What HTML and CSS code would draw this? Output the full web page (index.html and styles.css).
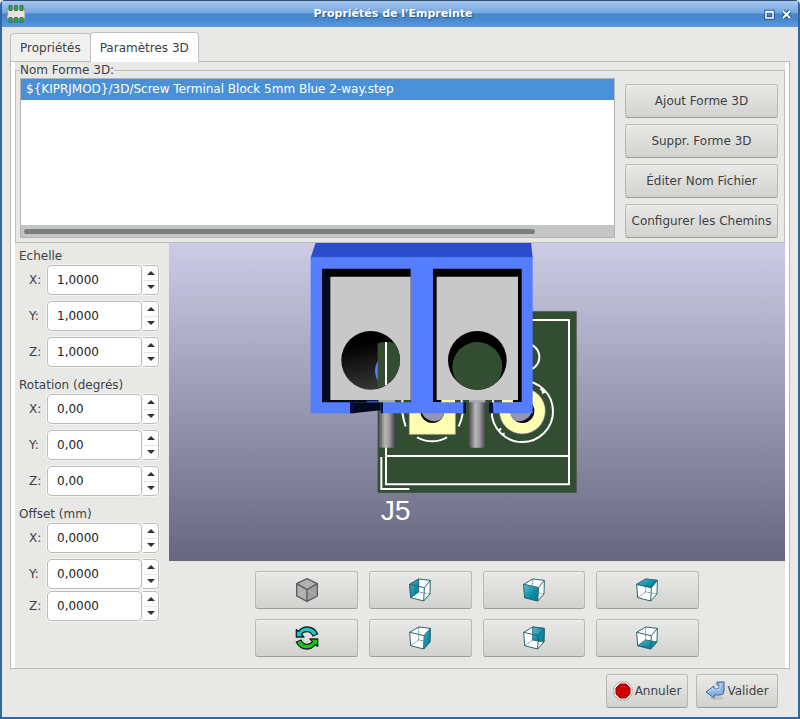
FILE: index.html
```html
<!DOCTYPE html>
<html lang="fr">

<head>
    <meta charset="UTF-8" />
    <meta name="viewport" content="width=device-width, initial-scale=1.0" />
    <title>Propriétés de l'Empreinte</title>
    <link rel="stylesheet" href="styles.css">
</head>

<body>
    <div class="window">
        <header class="titlebar">
            <svg class="app-icon" width="20" height="20" viewBox="0 0 20 20">
                <path d="M1 5h18v10H1v-3l1-2-1-2z" fill="#e4e4e2" stroke="#8a8a86" />
                <g fill="#0fc23a" stroke="#4d6b58">
                    <path d="M3 1.500h3v5H3zM8.500 1.500h3v5h-3zM14 1.500h3v5h-3z" />
                    <path d="M3 13.500h3v5H3zM8.500 13.500h3v5h-3zM14 13.500h3v5h-3z" />
                </g>
            </svg>
            <h1>Propriétés de l'Empreinte</h1>
            <div class="window-buttons">
                <button type="button" aria-label="Agrandir">
                    <svg width="11" height="11" viewBox="0 0 11 11" fill="none">
                        <path d="M2 2.500h7v6.500H2z" stroke="#24548c" stroke-width="3.500" />
                        <path d="M2 2.500h7v6.500H2zM2 3h7" stroke="#fff" stroke-width="1.500" />
                    </svg>
                </button>
                <button type="button" aria-label="Fermer">
                    <svg width="11" height="11" viewBox="0 0 11 11" fill="none">
                        <path d="M2 2l7 7M9 2l-7 7" stroke="#24548c" stroke-width="4" />
                        <path d="M2 2l7 7M9 2l-7 7" stroke="#fff" stroke-width="2" />
                    </svg>
                </button>
            </div>
        </header>

        <main>
            <nav class="tabs" role="tablist">
                <button type="button" class="tab" role="tab" aria-selected="false">Propriétés</button>
                <button type="button" class="tab is-active" role="tab" aria-selected="true">Paramètres 3D</button>
            </nav>

            <div class="panel">
                <fieldset class="shapes">
                    <legend>Nom Forme 3D:</legend>
                    <div class="shape-list">
                        <ul>
                            <li class="selected">${KIPRJMOD}/3D/Screw Terminal Block 5mm Blue 2-way.step</li>
                        </ul>
                        <div class="scrollbar">
                            <div class="thumb"></div>
                        </div>
                    </div>
                    <div class="shape-buttons">
                        <button type="button" class="btn">Ajout Forme 3D</button>
                        <button type="button" class="btn">Suppr. Forme 3D</button>
                        <button type="button" class="btn">Éditer Nom Fichier</button>
                        <button type="button" class="btn">Configurer les Chemins</button>
                    </div>
                </fieldset>

                <div class="editor">
                    <div class="settings">
                        <section class="group">
                            <h2>Echelle</h2>
                            <div class="field">
                                <label for="scale-x">X:</label>
                                <input type="text" id="scale-x" value="1,0000">
                                <div class="spin">
                                    <button type="button" class="up" aria-label="Plus"></button>
                                    <button type="button" class="down" aria-label="Moins"></button>
                                </div>
                            </div>
                            <div class="field">
                                <label for="scale-y">Y:</label>
                                <input type="text" id="scale-y" value="1,0000">
                                <div class="spin">
                                    <button type="button" class="up" aria-label="Plus"></button>
                                    <button type="button" class="down" aria-label="Moins"></button>
                                </div>
                            </div>
                            <div class="field">
                                <label for="scale-z">Z:</label>
                                <input type="text" id="scale-z" value="1,0000">
                                <div class="spin">
                                    <button type="button" class="up" aria-label="Plus"></button>
                                    <button type="button" class="down" aria-label="Moins"></button>
                                </div>
                            </div>
                        </section>

                        <section class="group">
                            <h2>Rotation (degrés)</h2>
                            <div class="field">
                                <label for="rot-x">X:</label>
                                <input type="text" id="rot-x" value="0,00">
                                <div class="spin">
                                    <button type="button" class="up" aria-label="Plus"></button>
                                    <button type="button" class="down" aria-label="Moins"></button>
                                </div>
                            </div>
                            <div class="field">
                                <label for="rot-y">Y:</label>
                                <input type="text" id="rot-y" value="0,00">
                                <div class="spin">
                                    <button type="button" class="up" aria-label="Plus"></button>
                                    <button type="button" class="down" aria-label="Moins"></button>
                                </div>
                            </div>
                            <div class="field">
                                <label for="rot-z">Z:</label>
                                <input type="text" id="rot-z" value="0,00">
                                <div class="spin">
                                    <button type="button" class="up" aria-label="Plus"></button>
                                    <button type="button" class="down" aria-label="Moins"></button>
                                </div>
                            </div>
                        </section>

                        <section class="group offset">
                            <h2>Offset (mm)</h2>
                            <div class="field">
                                <label for="off-x">X:</label>
                                <input type="text" id="off-x" value="0,0000">
                                <div class="spin">
                                    <button type="button" class="up" aria-label="Plus"></button>
                                    <button type="button" class="down" aria-label="Moins"></button>
                                </div>
                            </div>
                            <div class="field">
                                <label for="off-y">Y:</label>
                                <input type="text" id="off-y" value="0,0000">
                                <div class="spin">
                                    <button type="button" class="up" aria-label="Plus"></button>
                                    <button type="button" class="down" aria-label="Moins"></button>
                                </div>
                            </div>
                            <div class="field">
                                <label for="off-z">Z:</label>
                                <input type="text" id="off-z" value="0,0000">
                                <div class="spin">
                                    <button type="button" class="up" aria-label="Plus"></button>
                                    <button type="button" class="down" aria-label="Moins"></button>
                                </div>
                            </div>
                        </section>
                    </div>

                    <div class="preview">
                        <svg class="scene" viewBox="0 0 616 318" preserveAspectRatio="xMidYMin meet">
                            <defs>
                                <linearGradient id="pin">
                                    <stop offset="0" stop-color="#444" />
                                    <stop offset=".4" stop-color="#b8b8b8" />
                                    <stop offset=".65" stop-color="#999" />
                                    <stop offset="1" stop-color="#3c3c3c" />
                                </linearGradient>
                                <linearGradient id="bore" x1="0.400" y1="0" x2="0.600" y2="1">
                                    <stop offset=".2" stop-color="#000" />
                                    <stop offset="1" stop-color="#3a3a3a" />
                                </linearGradient>
                                <clipPath id="hole-left"><circle cx="212" cy="376" r="88" /></clipPath>
                                <clipPath id="hole-right"><circle cx="532" cy="376" r="88" /></clipPath>
                                <clipPath id="drill-left"><circle cx="397" cy="528" r="36" /></clipPath>
                                <clipPath id="drill-right"><circle cx="667" cy="528" r="36" /></clipPath>
                            </defs>
                            <g transform="translate(131 -8) scale(.33333)">
                                <!-- board -->
                                <path d="M233 229h597v544H233z" fill="#334d33" />
                                <g fill="none" stroke="#fff" stroke-width="6">
                                    <path d="M258 255h549v493H258zM258 663h549" />
                                    <path d="M244 666v96h84" />
                                    <circle cx="678" cy="366" r="40" />
                                    <circle cx="667" cy="529" r="92" />
                                    <path d="M305 498q0 42 12 76M488 536q-3 20-12 38M351 607q46 24 90 0" />
                                    <path d="M721 461l7 5 1 10M736 465l-5 8M598 586l5-6M607 598l7-3" />
                                </g>
                                <!-- pads -->
                                <path d="M328 500h138v98H328z" fill="#ffffb3" stroke="#bbaa91" stroke-width="2" />
                                <circle cx="667" cy="528" r="69" fill="#ffffb3" stroke="#8e709b" stroke-width="2" />
                                <circle cx="397" cy="528" r="36" fill="#0c0906" />
                                <circle cx="402" cy="521" r="38" fill="#9594b2" clip-path="url(#drill-left)" />
                                <circle cx="667" cy="528" r="36" fill="#0c0906" />
                                <circle cx="658" cy="521" r="38" fill="#9594b2" clip-path="url(#drill-right)" />
                                <!-- pins -->
                                <rect x="235" y="480" width="51" height="158" rx="8" fill="url(#pin)" />
                                <rect x="506" y="480" width="51" height="158" rx="8" fill="url(#pin)" />
                                <!-- terminal block -->
                                <path d="M48 20h645l5 48H32z" fill="#2b4dcc" />
                                <path d="M32 67h666v468H580v-33h-88v33H242v-33h-87v33H32z" fill="#547dff" />
                                <path d="M66 101h266v400H66zM399 101h266v400H399z" />
                                <path d="M66 101l25 24v370h109v7H66z" fill="#040920" />
                                <path d="M155 502h87v24l-84 9z" fill="#040920" />
                                <path d="M150 502h12v33h-12zM242 502h7v33h-7zM490 502h8v33h-8zM567 502h12v33h-12z" fill="#001044" />
                                <path d="M200 497h34v5h-34z" fill="#2b4dcc" />
                                <path d="M235 495h51v7h-51zM506 495h51v7h-51z" fill="#aaa" />
                                <path d="M424 495h41v7h-41zM606 495h33v7h-33z" fill="#ffffb3" />
                                <path d="M286 495h46v7h-46zM465 495h41v7h-41zM557 495h49v7h-49z" fill="#334d33" />
                                <path d="M304 495h6v7h-6zM482 495h6v7h-6zM576 495h6v7h-6z" fill="#fff" />
                                <path d="M91 125h241v370H91zM410 125h244v370H410z" fill="#c8c8c8" />
                                <g clip-path="url(#hole-left)">
                                    <path d="M120 285h184v184H120z" fill="url(#bore)" />
                                    <path d="M234 376q-18 32 0 64z" fill="#547dff" />
                                    <path d="M233 325q12-5 26-4 20 0 45 8v140h-71z" fill="#334d33" />
                                    <path d="M258 321v130" stroke="#fff" stroke-width="6" />
                                </g>
                                <g clip-path="url(#hole-right)">
                                    <path d="M440 285h184v184H440z" />
                                    <circle cx="532" cy="396" r="75" fill="#334d33" />
                                </g>
                                <text class="ref" x="242" y="856">J5</text>
                            </g>
                        </svg>

                        <svg class="symbols" width="0" height="0">
                            <symbol id="cube" viewBox="0 0 66 72">
                                <g fill="none" stroke="#2b6472" stroke-width="3" stroke-linejoin="round">
                                    <path d="M29 3v39l34 6M29 42L5 59" stroke-width="2" stroke-dasharray="8 3" />
                                    <path d="M2 19l27-16 35 4-18 22zM2 19l3 40 39 10 2-40M44 69l19-21 1-41" />
                                </g>
                            </symbol>
                            <linearGradient id="teal" x1="0" y1="0" x2="1" y2="1">
                                <stop offset="0" stop-color="#62bed2" />
                                <stop offset=".6" stop-color="#0a8ba6" />
                                <stop offset="1" stop-color="#087d98" />
                            </linearGradient>
                        </svg>

                        <div class="view-buttons">
                            <button type="button" class="btn" aria-label="Vue isométrique">
                                <svg width="24" height="24" viewBox="0 0 66 72">
                                    <path d="M33 2l31 15v37L33 70 2 54V17z" fill="#b0b0b0" />
                                    <path d="M33 35l31-18v37L33 70z" fill="#a0a0a0" />
                                    <path d="M33 2v33M2 54l31-19 31 19" stroke="#bebebe" stroke-width="2" fill="none" />
                                    <path d="M33 2l31 15v37L33 70 2 54V17zM2 17l31 18 31-18M33 35v35" fill="none" stroke="#5c5c5c" stroke-width="4" stroke-linejoin="round" />
                                </svg>
                            </button>
                            <button type="button" class="btn" aria-label="Vue gauche">
                                <svg width="24" height="24" viewBox="0 0 66 72">
                                    <path class="shell" d="M2 19L29 3l35 4-1 41-19 21-39-10z" />
                                    <path class="face" d="M2 19L29 3v39L5 59z" />
                                    <use href="#cube" />
                                </svg>
                            </button>
                            <button type="button" class="btn" aria-label="Vue avant">
                                <svg width="24" height="24" viewBox="0 0 66 72">
                                    <path class="shell" d="M2 19L29 3l35 4-1 41-19 21-39-10z" />
                                    <use href="#cube" />
                                    <path class="face" d="M2 19l44 10-2 40-39-10z" />
                                </svg>
                            </button>
                            <button type="button" class="btn" aria-label="Vue dessus">
                                <svg width="24" height="24" viewBox="0 0 66 72">
                                    <path class="shell" d="M2 19L29 3l35 4-1 41-19 21-39-10z" />
                                    <use href="#cube" />
                                    <path class="face" d="M2 19L29 3l35 4-18 22z" />
                                </svg>
                            </button>
                            <button type="button" class="btn" aria-label="Recharger">
                                <svg width="24" height="24" viewBox="0 0 72 72" stroke="#16221c" stroke-width="4" stroke-linejoin="round">
                                    <path d="M4 11v22h23l-8-8q6-8 17-8 12 0 18 13l14-6Q58 3 36 3 21 3 11 16z" fill="#12cccc" />
                                    <path d="M68 61V39H45l8 8q-6 8-17 8-12 0-18-13L4 48q10 21 32 21 15 0 25-13z" fill="#12cc12" />
                                </svg>
                            </button>
                            <button type="button" class="btn" aria-label="Vue droite">
                                <svg width="24" height="24" viewBox="0 0 66 72">
                                    <path class="shell" d="M2 19L29 3l35 4-1 41-19 21-39-10z" />
                                    <use href="#cube" />
                                    <path class="face" d="M46 29L64 7l-1 41-19 21z" />
                                </svg>
                            </button>
                            <button type="button" class="btn" aria-label="Vue arrière">
                                <svg width="24" height="24" viewBox="0 0 66 72">
                                    <path class="shell" d="M2 19L29 3l35 4-1 41-19 21-39-10z" />
                                    <path class="face" d="M29 3l35 4-1 41-34-6z" />
                                    <use href="#cube" />
                                </svg>
                            </button>
                            <button type="button" class="btn" aria-label="Vue dessous">
                                <svg width="24" height="24" viewBox="0 0 66 72">
                                    <path class="shell" d="M2 19L29 3l35 4-1 41-19 21-39-10z" />
                                    <path class="face" d="M5 59l24-17 34 6-19 21z" />
                                    <use href="#cube" />
                                </svg>
                            </button>
                        </div>
                    </div>
                </div>
            </div>
        </main>

        <footer>
            <button type="button" class="btn">
                <svg width="20" height="20" viewBox="0 0 20 20">
                    <path d="M6 1h8l5 5v8l-5 5H6l-5-5V6z" fill="#f4f4f2" stroke="#aaa" />
                    <path d="M7 3h6l4 4v6l-4 4H7l-4-4V7z" fill="#d00000" stroke="#a80000" />
                </svg>
                Annuler
            </button>
            <button type="button" class="btn">
                <svg width="20" height="20" viewBox="0 0 20 20">
                    <ellipse cx="12" cy="17" rx="7" ry="2" fill="#c4c4c2" />
                    <path d="M1 11l8-6v3h4q1 0 1-1V4h-2V1h7v9q0 4-4 4H9v3z" fill="#8db5e4" stroke="#3465a4" stroke-linejoin="round" />
                    <path d="M3 11l5-4v2h5q2 0 2-2V3h3" fill="none" stroke="#d4e4f6" />
                </svg>
                Valider
            </button>
        </footer>
    </div>
</body>

</html>
```
FILE: styles.css
```css
* {
    box-sizing: border-box;
}

body {
    margin: 0;
    background-color: #e8e8e6;
    color: #3c4144;
    font-family: "DejaVu Sans", sans-serif;
    font-size: 12px;
    line-height: 18px;
}

button,
input {
    font: inherit;
    color: inherit;
}

h1,
h2,
ul {
    margin: 0;
    padding: 0;
}

.window {
    display: flex;
    flex-direction: column;
    min-height: 100vh;
    border: 2px solid #2f66a4;
    border-top: 1px solid #30507c;
    border-radius: 5px 5px 0 0;
}

/* title bar */
.titlebar {
    display: grid;
    grid-template-columns: 40px 1fr 54px;
    align-items: center;
    height: 26px;
    padding: 0 4px;
    background: linear-gradient(#a5c7ec, #76a8e0 45%, #4585cb 50%, #4a8ad0 75%, #5f9bdc);
}

.titlebar h1 {
    color: #fff;
    font-size: 11px;
    font-weight: bold;
    text-align: center;
    text-shadow: 1px 1px 1px #24548c;
}

.app-icon {
    display: block;
}

.window-buttons {
    display: flex;
    justify-content: flex-end;
    gap: 6px;
    padding-right: 2px;
}

.window-buttons button {
    padding: 0;
    border: 0;
    background: none;
}

.window-buttons svg {
    display: block;
}

/* tabs */
main {
    display: flex;
    flex: 1;
    flex-direction: column;
    padding: 5px 8px 0;
}

.tabs {
    display: flex;
    align-items: flex-end;
}

.tab {
    height: 28px;
    padding: 0 9px;
    border: 1px solid #c0c0be;
    border-bottom: 0;
    border-radius: 4px 4px 0 0;
    background-color: #f0f0ef;
}

.tab.is-active {
    z-index: 1;
    height: 30px;
    margin: 0 0 -1px -1px;
    background-color: #fff;
}

.panel {
    display: flex;
    flex: 1;
    flex-direction: column;
    padding: 0 4px;
    border: 1px solid #bcbcba;
    box-shadow: inset 4px 0 #fff, inset -4px 0 #fff;
}

/* shape files */
.shapes {
    display: grid;
    grid-template-columns: 1fr 153px;
    gap: 10px;
    min-width: 0;
    margin: 0;
    padding: 0 6px 4px 4px;
    border: 1px solid #bcbcba;
    background-color: #e8e8e6;
}

.shapes legend {
    padding: 0;
    line-height: 16px;
}

.shape-list {
    display: flex;
    flex-direction: column;
    border: 1px solid #b4b4b2;
    background-color: #fff;
}

.shape-list ul {
    flex: 1;
    list-style: none;
}

.shape-list li {
    padding: 1px 5px;
    line-height: 19px;
}

.shape-list .selected {
    background-color: #4a90d9;
    color: #fff;
}

.scrollbar {
    padding: 4px 3px 3px;
    background-color: #c4c6c5;
}

.thumb {
    width: 87%;
    height: 5px;
    border-radius: 3px;
    background-color: #7a7e7e;
}

.shape-buttons {
    display: flex;
    flex-direction: column;
    gap: 6px;
    padding-top: 6px;
}

.btn {
    height: 34px;
    padding: 0 4px;
    border: 1px solid #b8b8b6;
    border-bottom-color: #9c9c9a;
    border-radius: 3px;
    background: linear-gradient(#e9e9e7, #d2d2d0);
    box-shadow: inset 0 1px #f0f0ee;
    white-space: nowrap;
}

/* scale, rotation, offset */
.editor {
    display: grid;
    flex: 1;
    grid-template-columns: 154px 1fr;
    background-color: #e8e8e6;
}

.settings {
    display: flex;
    flex-direction: column;
    gap: 9px;
    padding: 4px 10px 0 4px;
}

.group {
    display: flex;
    flex-direction: column;
    gap: 6px;
}

.group h2 {
    margin-bottom: -6px;
    font-size: 12px;
    font-weight: normal;
}

.offset .field:last-child {
    margin-top: -4px;
}

.field {
    display: grid;
    grid-template-columns: 18px 1fr 17px;
    align-items: center;
    height: 30px;
    padding-left: 10px;
}

.field input {
    width: 100%;
    height: 30px;
    padding: 0 9px;
    border: 1px solid #bcbcba;
    border-radius: 4px;
    outline: 1px solid #f4f4f3;
    background-color: #fff;
    color: #222;
}

.spin {
    display: grid;
    height: 30px;
    margin-left: 1px;
    border: 1px solid #bcbcba;
    border-left: 0;
    border-radius: 0 4px 4px 0;
    outline: 1px solid #f4f4f3;
    background-color: #fff;
}

.spin button {
    display: grid;
    place-items: center;
    padding: 0;
    border: 0;
    background: none;
}

.spin .down {
    border-top: 1px solid #e6e6e4;
}

.spin button::before {
    content: "";
    border: 4px solid transparent;
}

.spin .up::before {
    border-top: 0;
    border-bottom-color: #2e3436;
}

.spin .down::before {
    border-bottom: 0;
    border-top-color: #2e3436;
}

/* 3D view */
.preview {
    display: flex;
    flex-direction: column;
}

.scene {
    display: block;
    width: 100%;
    background: linear-gradient(#cccce6, #66667f);
}

.ref {
    fill: #fff;
    font-family: "Liberation Sans", sans-serif;
    font-size: 85px;
}

.symbols {
    display: block;
}

.view-buttons {
    display: grid;
    grid-template-columns: repeat(4, 1fr);
    gap: 10px 11px;
    padding: 10px 14%;
}

.view-buttons .btn {
    display: grid;
    place-items: center;
    height: 38px;
}

.shell {
    fill: #fff;
}

.face {
    fill: url(#teal);
    stroke: #1a6376;
    stroke-width: 2px;
}

footer {
    display: flex;
    justify-content: flex-end;
    gap: 8px;
    padding: 5px 20px 9px;
}

footer .btn {
    display: flex;
    align-items: center;
    justify-content: center;
    gap: 2px;
    width: 82px;
}
```
